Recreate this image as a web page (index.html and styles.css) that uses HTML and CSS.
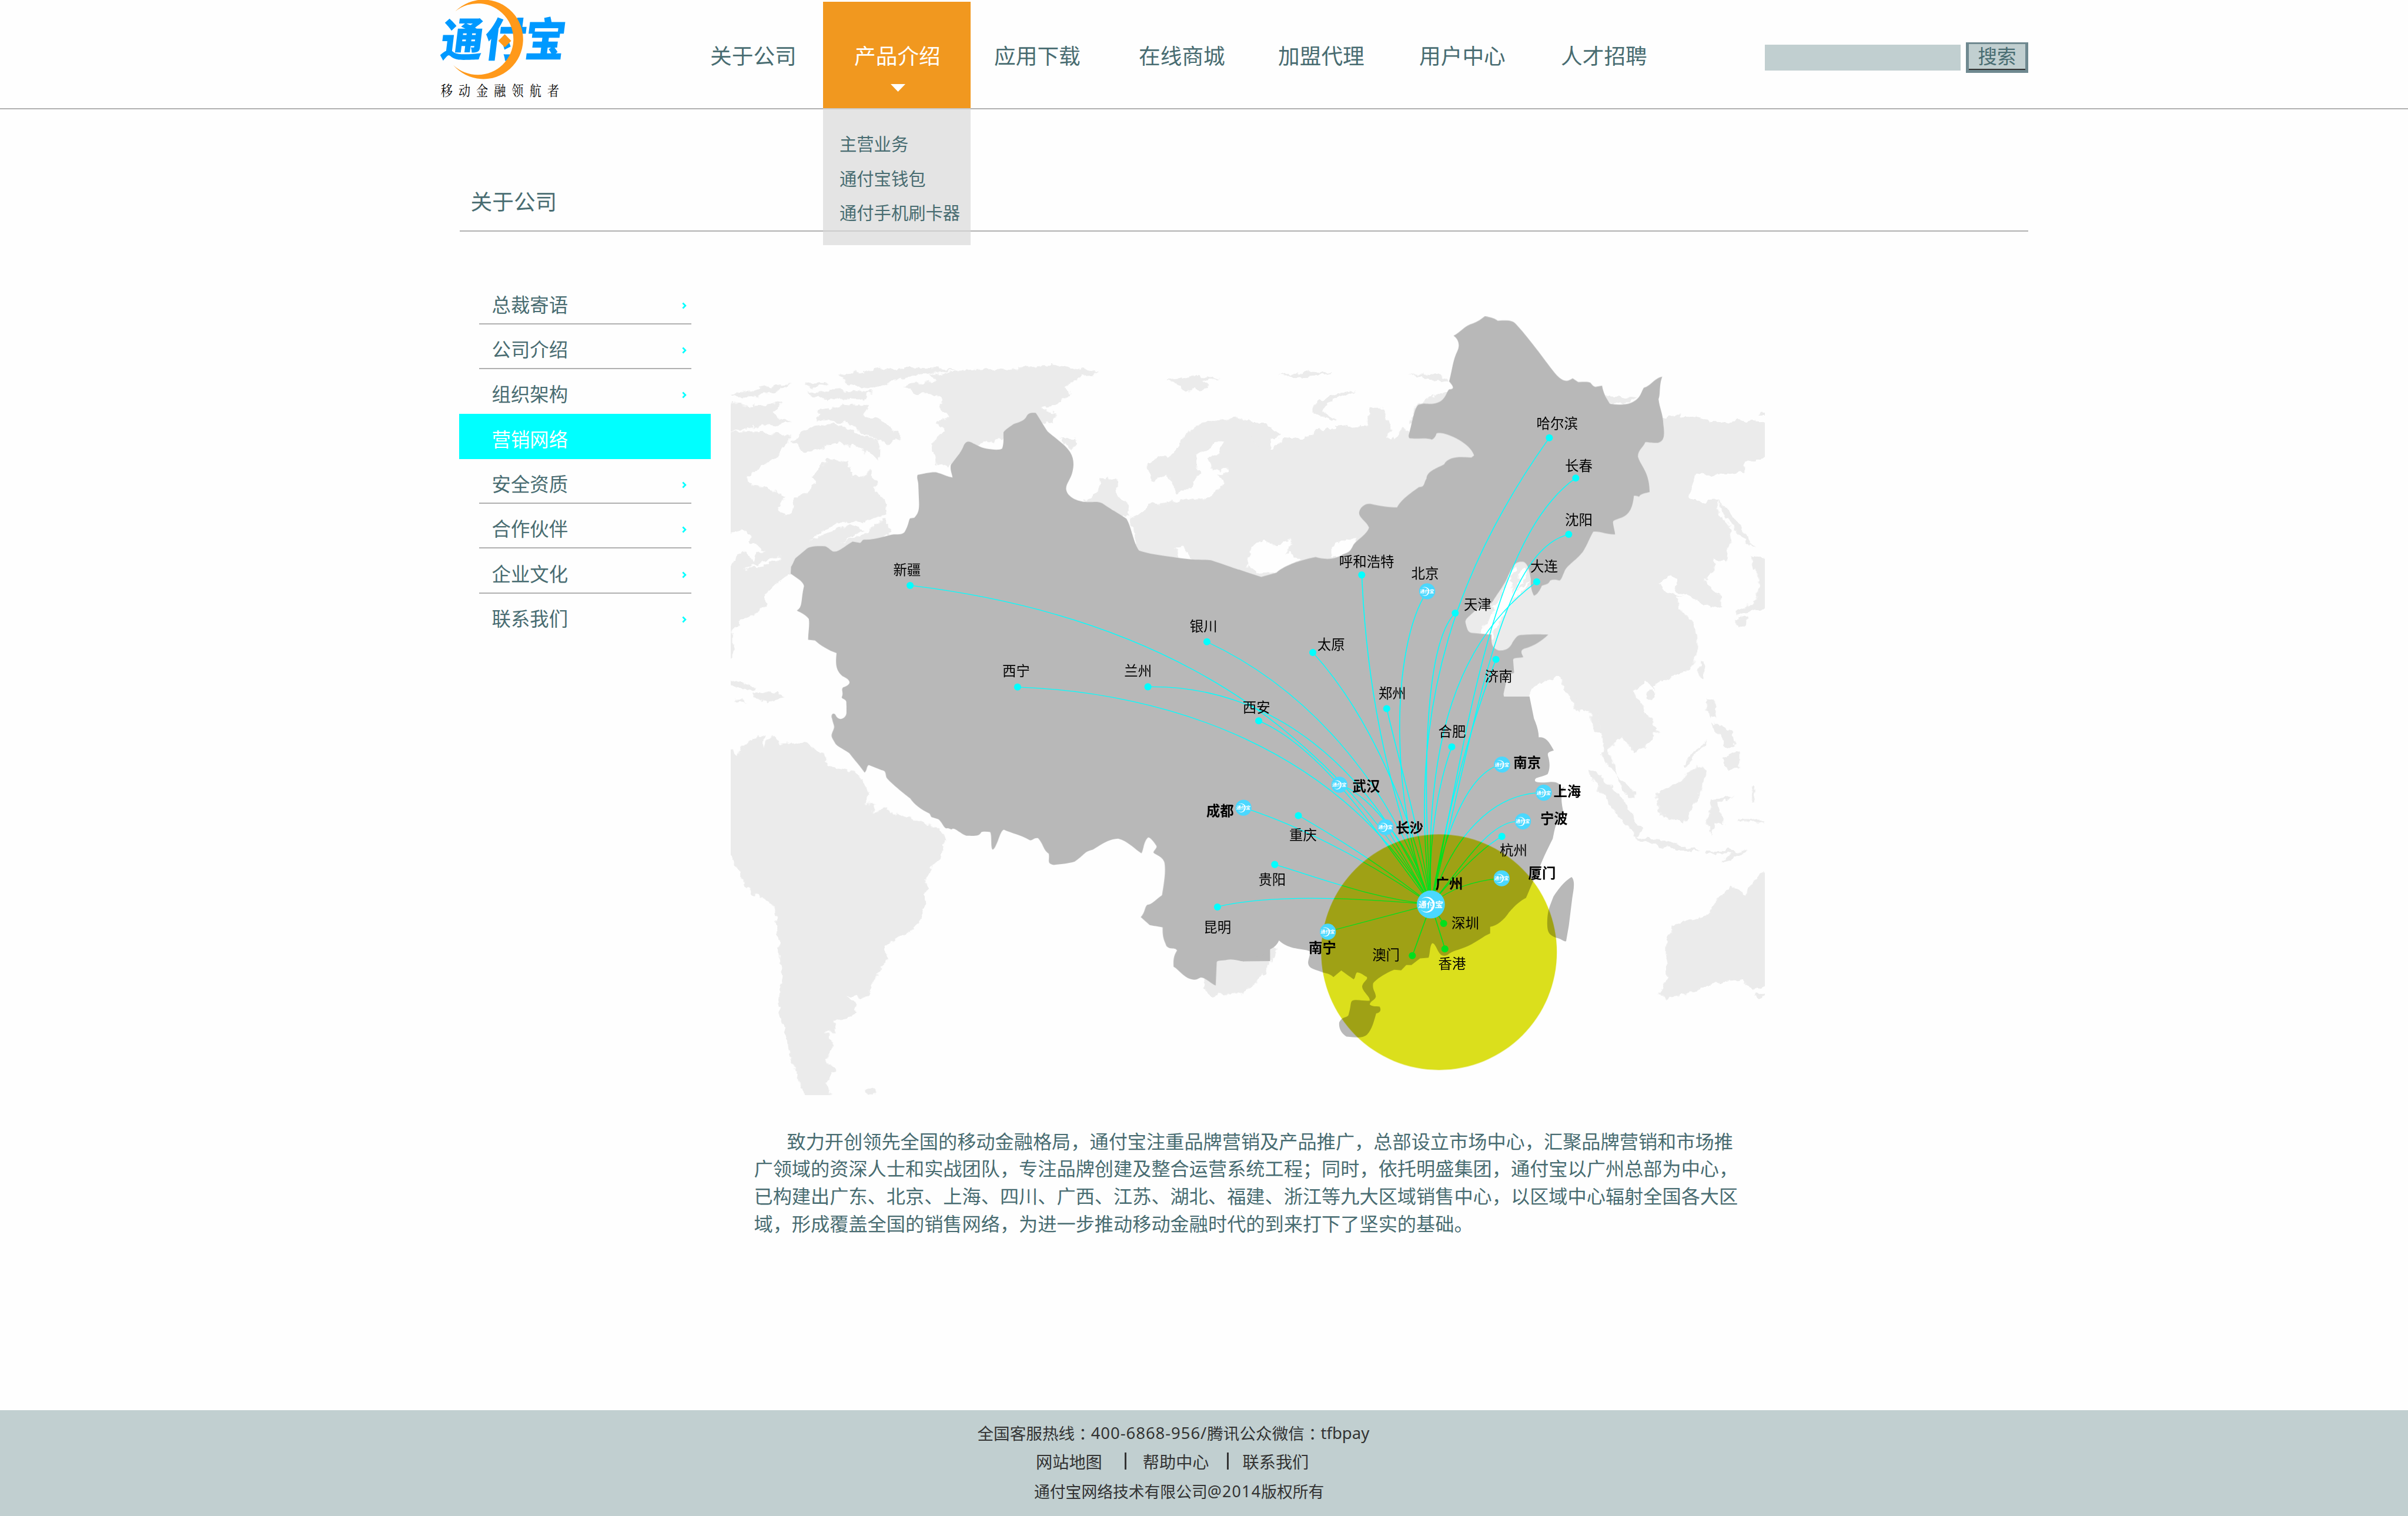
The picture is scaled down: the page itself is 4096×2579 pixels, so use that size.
FILE: index.html
```html
<!DOCTYPE html>
<html lang="zh-CN">
<head>
<meta charset="utf-8">
<title>通付宝 - 营销网络</title>
<link rel="stylesheet" href="styles.css">
</head>
<body>
<header class="header">
  <a class="logo">
    <svg viewBox="0 0 1080 750">
      <g class="logo-name" transform="translate(0 408) skewX(-7) scale(1 1.09)">
        <text x="74" y="0" textLength="308" lengthAdjust="spacingAndGlyphs">通</text>
        <text x="388" y="0" textLength="300" lengthAdjust="spacingAndGlyphs">付</text>
        <text x="682" y="0" textLength="296" lengthAdjust="spacingAndGlyphs">宝</text>
      </g>
      <path class="logo-moon" d="M190,82A288,288 0 1 1 175,472A259,259 0 1 0 190,82Z"/>
      <path class="logo-moon" d="M549,248L596,296L549,343L502,296Z"/>
      <text class="logo-slogan" x="84" y="580" transform="scale(1 1.2)">移动金融领航者</text>
    </svg>
  </a>
  <nav class="nav">
    <a>关于公司</a>
    <div class="nav-open">
      <a>产品介绍</a>
      <span class="caret"></span>
      <ul class="dropdown">
        <li>主营业务</li>
        <li>通付宝钱包</li>
        <li>通付手机刷卡器</li>
      </ul>
    </div>
    <a>应用下载</a>
    <a>在线商城</a>
    <a>加盟代理</a>
    <a>用户中心</a>
    <a>人才招聘</a>
  </nav>
  <div class="search">
    <div class="search-field"></div>
    <div class="search-button"><span>搜索</span></div>
  </div>
</header>

<h1 class="section-title">关于公司</h1>

<main class="main">
  <ul class="side">
    <li><span>总裁寄语</span><svg viewBox="0 0 10 16"><path d="M1.5 2L7.5 8L1.5 14"/></svg></li>
    <li><span>公司介绍</span><svg viewBox="0 0 10 16"><path d="M1.5 2L7.5 8L1.5 14"/></svg></li>
    <li class="plain"><span>组织架构</span><svg viewBox="0 0 10 16"><path d="M1.5 2L7.5 8L1.5 14"/></svg></li>
    <li class="active"><span>营销网络</span></li>
    <li><span>安全资质</span><svg viewBox="0 0 10 16"><path d="M1.5 2L7.5 8L1.5 14"/></svg></li>
    <li><span>合作伙伴</span><svg viewBox="0 0 10 16"><path d="M1.5 2L7.5 8L1.5 14"/></svg></li>
    <li><span>企业文化</span><svg viewBox="0 0 10 16"><path d="M1.5 2L7.5 8L1.5 14"/></svg></li>
    <li class="plain"><span>联系我们</span><svg viewBox="0 0 10 16"><path d="M1.5 2L7.5 8L1.5 14"/></svg></li>
  </ul>

  <div class="content">
    <svg class="map" viewBox="1770 740 2505 1920">
      <defs>
        <filter id="coast" x="-2%" y="-2%" width="104%" height="104%">
          <feTurbulence type="fractalNoise" baseFrequency="0.05" numOctaves="3" seed="4"/>
          <feDisplacementMap in="SourceGraphic" scale="20" xChannelSelector="R" yChannelSelector="G"/>
        </filter>
        <clipPath id="frame"><rect x="1770" y="740" width="2505" height="1912"/></clipPath>
        <symbol id="mark" viewBox="-34 -34 68 68" overflow="visible">
          <circle r="34" fill="#4ad8ff"/>
          <path fill="#fff" d="M-23,-13A19,19 0 1 1 -24,13A17,17 0 1 0 -23,-13Z"/>
          <text class="mark-name" x="-30" y="8" transform="skewX(-6)">通付宝</text>
        </symbol>
      </defs>

      <!-- world land -->
      <g clip-path="url(#frame)"><g filter="url(#coast)"><g transform="translate(1750 740) scale(.82908 .63776)">
        <g class="land">
          <path d="M528,300L620,285L610,262L700,245L860,238L960,226L1020,238L1100,252L1050,268L1000,310L1020,335L980,375L925,395L975,410L960,440L935,445L820,500L750,525L720,517L680,590L660,618L625,600L610,520L650,470L625,440L665,420L635,390L640,350L600,332L560,335Z"/>
          <path d="M340,265C400,250 520,225 680,242L600,260L520,275L470,300L430,315L370,300Z"/>
          <path d="M24,335L120,310L200,295L150,330L60,352Z"/><path d="M250,290L310,292L300,305L240,308Z"/>
          <path d="M240,330L340,318L440,330L400,358L300,355Z"/><path d="M0,366L90,380L180,368L140,410L200,440L120,460L60,470L0,480Z"/>
          <path d="M275,440L280,400L350,375L430,380L410,410L480,450L523,500L480,525L420,490L370,450L300,435Z"/>
          <path d="M200,510L260,460L330,450L410,490L460,515L455,590L400,540L330,520L240,560Z"/>
          <path d="M0,480L120,478L200,500L175,545L165,570L100,620L75,650L85,685L130,690L180,725L165,765L180,803L200,790L210,730L260,700L270,665L262,645L290,610L310,580L370,600L380,655L440,625L445,700L485,750L480,795L400,822L330,825L255,890L300,870L370,830L415,850L345,900L410,870L470,810L495,868L440,895L330,945L250,960L200,1018L160,1050L125,1090L128,1145L60,1190L30,1230L30,1340L0,1348Z"/>
          <path d="M1600,460L1500,425L1440,435L1380,455L1345,500L1320,560L1245,600L1245,645L1262,665L1300,640L1330,710L1370,690L1390,630L1380,570L1440,520L1462,520L1450,560L1420,580L1430,625L1525,620L1450,640L1465,675L1415,735L1390,730L1285,750L1245,755L1220,795L1188,810L1220,960L1600,1060Z"/>
          <path d="M1105,655L1150,660L1150,705L1190,770L1190,805L1110,765L1050,745L1100,710Z"/>
          <path d="M1300,280L1370,270L1450,272L1400,290L1430,310L1360,325Z"/><path d="M990,505L1030,505L1035,525L1015,550Z"/>
          <path d="M0,1415L50,1430L100,1450L90,1462L40,1455Z"/><path d="M90,1470L160,1468L178,1490L130,1508L90,1490Z"/><path d="M35,1495h30v10h-30z"/>
        </g>
        <path class="sea" d="M0,870L60,850L85,870L80,900L128,935L100,935L90,975L60,930L35,970L24,1000L0,1000Z"/>
        <path class="sea" d="M60,1000L165,950L170,965L110,990Z"/>
        <path class="sea" d="M1325,925L1345,920L1375,965L1345,970Z"/>
        <g transform="translate(1508 0)">
          <g class="land">
            <path d="M-30,445L60,445L90,455L125,495L90,512L20,490L65,545L100,545L130,500L190,505L240,470L320,460L370,455L385,390L420,390L430,430L450,470L430,500L460,505L475,460L500,480L600,470L1240,422L1320,420L1400,445L1480,435L1560,445L1560,575L1480,590L1480,630L1430,640L1340,640L1310,725L1360,745L1400,740L1400,780L1440,850L1425,970L1390,965L1385,1010L1360,1045L1410,1110L1410,1150L1350,1130L1310,1100L1280,1110L1290,1150L1335,1215L1340,1280L1330,1370L1290,1400L1210,1440L1215,1455L1190,1430L1155,1465L1170,1530L1230,1620L1040,1620L1025,1540L985,1540L960,1470L940,1410L880,1430L830,1515L780,1510L-30,1000Z"/>
            <path d="M345,322L290,330L225,365L215,405L240,430L290,432L250,405L260,365L310,340Z"/>
            <path d="M500,258L570,258L615,285L590,290Z"/><path d="M110,265L200,250L275,258L200,270Z"/>
            <path d="M560,345L640,320L640,420L500,450L520,380Z"/><path d="M1070,340L1160,352L1140,372L1080,365Z"/>
            <path d="M1400,740L1430,770L1460,820L1495,900L1510,930L1470,880L1420,800Z"/>
            <path d="M1500,945L1560,970L1560,1145L1500,1160L1460,1180L1450,1165L1500,1130L1530,1060L1500,990Z"/>
            <path d="M1450,1190L1490,1180L1480,1220L1460,1215Z"/>
            <path d="M1520,410h40v12h-40z"/>
            <ellipse cx="1355" cy="1385" rx="10" ry="33"/><ellipse cx="1208" cy="1478" rx="15" ry="18"/>
            <path d="M1368,1490L1390,1500L1395,1568L1370,1540Z"/>
          </g>
          <path class="sea" d="M30,960L40,910L80,895L110,915L160,885L155,905L140,940L185,960L110,1015L60,1020L25,990Z"/>
          <path class="sea" d="M275,955L270,920L300,890L345,890L330,935Z"/>
          <path class="sea" d="M1230,1055L1265,1020L1280,1045L1275,1080L1310,1100L1290,1105L1250,1090Z"/>
          <path class="sea" d="M812,983L788,1014L772,1093L752,1140L738,1140L748,1155L706,1244L740,1262L768,1187L788,1155L792,1134L836,1077L852,1051L816,1077L840,1019L840,998L820,1025L804,1093L796,1056L790,1040L812,1009Z"/>
        </g>
        <g class="land" transform="translate(0 1505)">
          <path d="M0,170L24,185L45,205L65,160L125,120L120,180L130,150L150,135L170,158L250,158L272,185L300,210L310,240L350,258L385,262L413,300L428,350L415,385L450,390L435,428L465,400L510,430L560,442L600,465L640,490L648,540L640,590L617,615L593,680L596,730L585,800L560,870L520,885L473,930L478,980L440,1065L415,1125L385,1125L358,1110L380,1140L392,1170L380,1200L325,1212L332,1255L298,1255L325,1290L315,1340L296,1360L328,1395L305,1450L330,1520L250,1520L210,1400L185,1270L165,1180L173,1080L160,870L152,775L70,710L24,590L0,560Z"/>
          <ellipse cx="433" cy="1478" rx="15" ry="14"/>
          <path d="M1405,1030L1412,1105L1430,1122L1470,1108L1520,1103L1568,1055L1600,1000L1618,940L1600,900L1440,960Z"/>
        </g>
        <g class="land" transform="translate(1508 1505)">
          <path d="M985,-20L995,40L1045,20L1065,150L1062,200L1095,270L1160,340L1155,367L1125,340L1090,230L1080,180L1120,130L1160,200L1215,135L1210,70L1160,-20Z"/>
          <path d="M1020,260L1060,280L1120,370L1175,480L1170,520L1110,440L1050,330Z"/><path d="M1165,515L1230,520L1350,565L1280,565L1175,530Z"/>
          <path d="M1360,565h90v10h-90z"/><path d="M1410,610L1440,575L1490,560L1430,605Z"/>
          <path d="M1222,350L1280,310L1340,240L1365,265L1345,360L1300,465L1230,430Z"/>
          <path d="M1380,370L1450,355L1400,385L1420,470L1390,460L1380,500L1370,460Z"/>
          <path d="M1365,-20L1395,10L1380,60Z"/><path d="M1385,80L1440,110L1450,170L1420,170Z"/><path d="M1410,210L1465,190L1465,250L1430,260Z"/>
          <path d="M1500,320h8v60h-8z"/><path d="M1460,450h75v9h-75z"/><path d="M1300,240L1365,140L1360,160L1305,250Z"/>
          <path d="M1560,620L1520,660L1500,690L1480,730L1440,700L1390,760L1370,810L1265,850L1248,930L1250,1050L1228,1110L1252,1130L1330,1100L1400,1065L1470,1055L1500,1095L1560,1075Z"/>
          <path d="M1505,1115L1560,1100L1520,1130Z"/>
        </g>
      </g></g></g>

      <!-- China -->
      <g class="china" transform="translate(1750 740) scale(.82908 .63776)">
        <path d="M199,1018L200,992C205,985 210,962 214,958L242,928C250,915 270,912 300,914C310,918 318,934 325,934C340,936 355,915 380,896L402,901C408,897 408,888 414,889C450,890 480,872 500,869C520,869 525,869 532,860C545,830 544,812 548,808L560,806C572,790 575,775 574,745L572,680C572,665 566,655 570,643C590,638 605,632 625,633C640,638 655,650 672,653C671,640 664,625 667,605C675,590 695,560 703,537C708,518 715,515 722,517C735,522 750,538 770,543C790,548 812,549 817,543C823,520 820,500 821,481C826,470 840,460 850,450C865,443 878,440 887,424C892,408 900,405 915,407C925,425 940,460 950,478C965,497 1000,525 1015,555C1027,580 1027,605 1023,628C1018,660 1003,675 1004,697C1006,725 1035,745 1065,746C1085,747 1095,742 1110,751C1130,770 1165,795 1180,809C1195,840 1200,900 1217,930C1250,945 1290,950 1350,961C1380,967 1405,964 1427,967C1460,980 1520,1010 1573,1031V1600H362V1505C360,1495 350,1495 348,1488C355,1470 345,1460 352,1450C375,1440 380,1425 350,1407C330,1385 330,1360 333,1320C310,1310 285,1290 270,1272L250,1269C250,1240 255,1215 252,1190C240,1170 225,1165 217,1158C235,1145 228,1120 238,1065C235,1045 210,1030 199,1018Z"/>
        <path transform="translate(1508 0)" d="M0,1003L65,1031L110,1015C130,990 170,970 225,955C245,962 275,970 305,945C325,935 325,935 335,910C345,890 375,870 381,843C375,820 350,805 352,785C355,765 370,750 385,753C410,760 440,768 463,766C475,735 510,705 527,689C545,690 540,675 549,657C550,630 575,620 600,603C615,570 650,575 680,577L688,569C680,535 640,500 600,486C590,483 580,483 578,486C575,500 570,505 565,509C550,500 520,507 500,504C495,500 497,490 499,482C510,430 515,375 530,375C545,370 540,373 560,373C605,373 605,330 615,318C630,318 630,310 615,288C625,240 625,210 640,170C648,145 640,125 628,114C650,100 660,75 685,67C705,58 712,45 720,41C740,44 750,50 757,57C790,55 800,55 812,72C860,140 900,220 930,265C950,290 960,290 976,276L992,290C1010,290 1020,288 1028,293C1035,305 1040,310 1045,308L1062,304C1065,330 1075,355 1085,372C1100,377 1130,378 1145,370C1175,355 1175,330 1184,312C1205,305 1215,275 1238,270C1228,300 1233,340 1227,355C1230,390 1240,410 1241,450C1245,490 1245,515 1225,521C1200,522 1195,516 1188,519C1185,535 1165,550 1167,575C1175,610 1200,630 1201,708C1190,712 1175,713 1170,726C1165,722 1160,722 1155,722C1152,760 1145,795 1115,807C1100,815 1093,815 1094,825C1095,840 1100,860 1100,869C1075,870 1055,855 1036,859C1025,885 1020,905 1006,935C985,970 960,985 952,1010C945,1030 942,1045 936,1044C925,1040 915,1040 910,1045C905,1060 895,1060 886,1064C880,1085 870,1100 863,1102C858,1090 852,1070 854,1040C850,1010 845,975 830,973C805,970 800,995 787,1028C775,1065 750,1105 742,1125C730,1145 700,1140 690,1160C675,1180 660,1190 663,1205C668,1230 670,1240 680,1243L739,1250C738,1280 738,1300 760,1310C785,1312 795,1295 800,1280C810,1260 815,1250 830,1251C860,1248 880,1248 905,1250C885,1275 860,1295 835,1303C820,1310 828,1325 832,1335C815,1340 805,1335 802,1345L805,1395C795,1400 790,1400 785,1410L774,1475C775,1500 790,1502 805,1503C830,1505 830,1510 840,1520C850,1540 855,1555 860,1568V1600H0Z"/>
        <path transform="translate(0 1505)" d="M362,0V-20H1600V985L1523,986C1510,985 1490,975 1475,980C1460,985 1445,980 1444,990L1441,1078C1430,1075 1410,1045 1396,1048C1385,1055 1380,1060 1360,1050C1340,1035 1330,1015 1318,1007C1316,980 1320,960 1328,945C1322,930 1310,945 1297,928C1290,905 1285,895 1286,857C1270,852 1260,852 1248,848L1222,818C1235,800 1233,780 1241,771C1255,770 1262,755 1284,735C1290,690 1296,640 1291,610C1285,585 1260,580 1259,572C1260,565 1270,555 1268,548C1262,535 1250,515 1244,515C1230,530 1230,565 1224,576C1205,560 1185,530 1156,520C1130,522 1115,535 1082,562C1055,570 1060,580 1029,607C1010,615 995,615 968,620C945,615 957,600 953,577C935,560 940,545 922,518C910,515 905,528 898,526C870,505 845,500 822,486C810,490 805,545 790,562C782,560 788,510 782,495C770,493 760,492 755,497C750,510 740,510 712,509C695,500 680,480 672,482C667,490 663,478 655,481C645,480 640,450 628,445L610,438L605,425C580,410 560,390 548,367C525,345 485,300 480,290C475,280 480,262 465,260L427,240C420,245 423,260 415,269C405,250 385,220 370,195C360,185 335,170 330,160C322,140 315,135 321,115C330,90 325,95 320,65C315,45 325,40 330,50C335,65 345,70 355,60C368,45 362,25 362,0Z"/>
        <path transform="translate(1508 1505)" d="M-5,-20H850L863,63C870,85 877,110 877,135C895,133 905,145 921,185C905,190 902,195 904,205C912,240 908,260 903,275C880,290 865,285 866,300C868,307 880,307 900,306C930,300 940,310 943,330L952,322C940,350 942,380 950,425L945,430C925,460 925,480 918,520C905,555 890,590 878,635C860,680 845,730 840,745C825,755 810,770 790,800C775,830 755,850 735,855L735,880C715,890 700,910 670,928C640,945 625,945 610,962C595,970 588,960 582,945C575,925 570,915 565,918C558,930 560,955 555,972L530,975L505,1000L490,1000L475,1020L455,1018C430,1030 400,1055 393,1070C390,1095 400,1100 401,1120C398,1135 385,1135 383,1150C395,1160 400,1155 412,1158C417,1170 415,1180 402,1184C395,1215 390,1245 375,1265C360,1280 345,1275 315,1272C300,1260 292,1240 294,1218C305,1190 320,1205 322,1185C330,1150 325,1138 335,1134C350,1130 370,1138 383,1135C385,1120 360,1100 361,1080C365,1060 380,1055 374,1045C365,1040 360,1030 346,1028C340,1035 342,1050 336,1054C325,1045 310,1030 300,1021L277,1046C265,1030 255,1033 240,1025C215,1015 203,1010 203,990C205,970 210,960 208,948C185,935 150,945 118,907C110,930 100,935 85,945C75,960 68,970 55,967C35,975 25,973 15,986L-5,980Z"/>
        <path transform="translate(1508 1505)" d="M973,666C985,680 978,720 975,745L965,850L957,910C950,912 945,900 925,895C905,885 903,870 902,850C902,800 905,790 920,740C940,700 955,680 973,666Z"/>
      </g>

      <!-- routes to Guangzhou -->
      <g class="routes" transform="translate(1750 740) scale(.82908 .63776)">
        <path d="M548,1063C1100,1150 1700,1430 2070,2275"/>
        <path d="M862,1449C1300,1470 1800,1680 2070,2275"/>
        <path d="M1243,1448C1600,1440 1900,1750 2070,2275"/>
        <path d="M1415,1277C1700,1450 1950,1800 2070,2275"/>
        <path d="M1567,1577C1750,1680 1900,1980 2070,2275"/>
        <path d="M1725,1318C1860,1510 2000,1850 2070,2275"/>
        <path d="M1868,1023C1880,1400 1930,1800 2070,2275"/>
        <path d="M1941,1531C1970,1700 2040,2000 2070,2275"/>
        <path d="M2059,1085C1950,1300 1950,1900 2070,2275"/>
        <path d="M2141,1168C2040,1300 2050,1900 2070,2275"/>
        <path d="M2416,502C2170,950 1990,1500 2070,2275"/>
        <path d="M2493,655C2250,880 2180,1600 2070,2275"/>
        <path d="M2473,869C2270,930 2200,1600 2070,2275"/>
        <path d="M2379,1049C2150,1270 2050,1650 2070,2275"/>
        <path d="M2260,1344C2190,1580 2120,1900 2070,2275"/>
        <path d="M2131,1676C2090,1820 2060,2050 2070,2275"/>
        <path d="M2278,1743C2170,1770 2100,2050 2070,2275"/>
        <path d="M2400,1850C2250,1850 2130,2020 2070,2275"/>
        <path d="M2339,1959C2250,1950 2190,2080 2070,2275"/>
        <path d="M2277,2016C2220,2060 2150,2150 2070,2275"/>
        <path d="M2277,2175C2200,2185 2130,2210 2070,2275"/>
        <path d="M1803,1820C1900,1860 2020,2080 2070,2275"/>
        <path d="M1938,1980C1990,2090 2030,2180 2070,2275"/>
        <path d="M1522,1907C1720,1990 1920,2140 2070,2275"/>
        <path d="M1683,1937C1820,2040 1950,2150 2070,2275"/>
        <path d="M1614,2123C1780,2190 1900,2250 2070,2275"/>
        <path d="M1446,2284C1620,2230 1900,2255 2070,2275"/>
        <path d="M1769,2378L2070,2275"/><path d="M2107,2347L2070,2275"/><path d="M2016,2469L2070,2275"/><path d="M2111,2443L2070,2275"/>
      </g>
      <g class="dots">
        <circle cx="2204.3" cy="1418" r="8.6"/><circle cx="2464.7" cy="1664" r="8.6"/><circle cx="2780.5" cy="1663.5" r="8.6"/>
        <circle cx="2923.5" cy="1554.4" r="8.6"/><circle cx="3049" cy="1746" r="8.6"/><circle cx="3180" cy="1580.5" r="8.6"/>
        <circle cx="3298.5" cy="1392.5" r="8.6"/><circle cx="3359" cy="1716.5" r="8.6"/><circle cx="3525" cy="1485" r="8.6"/>
        <circle cx="3753" cy="1060" r="8.6"/><circle cx="3817" cy="1157.7" r="8.6"/><circle cx="3800" cy="1294" r="8.6"/>
        <circle cx="3722.5" cy="1409" r="8.6"/><circle cx="3623.8" cy="1597" r="8.6"/><circle cx="3516.7" cy="1809" r="8.6"/>
        <circle cx="3638" cy="2026" r="8.6"/><circle cx="3145" cy="1975.5" r="8.6"/><circle cx="3087.8" cy="2094" r="8.6"/>
        <circle cx="2949" cy="2197" r="8.6"/><circle cx="3497" cy="2237" r="8.6"/><circle cx="3421" cy="2315" r="8.6"/><circle cx="3500" cy="2298.5" r="8.6"/>
      </g>
      <circle class="zone" cx="3485.8" cy="2306.5" r="285.5"/>

      <use href="#mark" x="3432" y="2157" width="68" height="68"/>
      <use href="#mark" x="3437.5" y="1412.5" width="39" height="39"/>
      <use href="#mark" x="3619" y="1832.3" width="39" height="39"/>
      <use href="#mark" x="3720" y="1900.5" width="39" height="39"/>
      <use href="#mark" x="3669.5" y="1970" width="39" height="39"/>
      <use href="#mark" x="3618" y="2108" width="39" height="39"/>
      <use href="#mark" x="3225" y="1881.4" width="39" height="39"/>
      <use href="#mark" x="3336.5" y="1984" width="39" height="39"/>
      <use href="#mark" x="2992.5" y="1937" width="39" height="39"/>
      <use href="#mark" x="3197" y="2237.5" width="39" height="39"/>

      <g class="city">
        <text x="2163.5" y="1392">新疆</text><text x="2882" y="1529">银川</text><text x="2428" y="1638">西宁</text>
        <text x="2723" y="1638">兰州</text><text x="3722" y="1037">哈尔滨</text><text x="3791" y="1140">长春</text>
        <text x="3791" y="1271">沈阳</text><text x="3707" y="1384">大连</text><text x="3243.6" y="1372">呼和浩特</text>
        <text x="3418.5" y="1401.5">北京</text><text x="3546" y="1476">天津</text><text x="3191" y="1573">太原</text>
        <text x="3597" y="1650">济南</text><text x="3339" y="1692">郑州</text><text x="3010" y="1726">西安</text>
        <text x="3484" y="1784">合肥</text><text x="3633" y="2072">杭州</text><text x="3123" y="2035">重庆</text>
        <text x="3048" y="2143">贵阳</text><text x="3516" y="2249">深圳</text><text x="3324" y="2325">澳门</text>
        <text x="3484" y="2347">香港</text><text x="2915.5" y="2259">昆明</text>
      </g>
      <g class="city hub">
        <text x="3666" y="1859">南京</text><text x="3276" y="1916">武汉</text><text x="3763" y="1930">上海</text>
        <text x="3381" y="2018">长沙</text><text x="3731" y="1995">宁波</text><text x="3702" y="2128">厦门</text>
        <text x="3477" y="2153">广州</text><text x="3170" y="2308">南宁</text><text x="2922" y="1977">成都</text>
      </g>
    </svg>

    <p class="intro">致力开创领先全国的移动金融格局，通付宝注重品牌营销及产品推广，总部设立市场中心，汇聚品牌营销和市场推<br>广领域的资深人士和实战团队，专注品牌创建及整合运营系统工程；同时，依托明盛集团，通付宝以广州总部为中心，<br>已构建出广东、北京、上海、四川、广西、江苏、湖北、福建、浙江等九大区域销售中心，以区域中心辐射全国各大区<br>域，形成覆盖全国的销售网络，为进一步推动移动金融时代的到来打下了坚实的基础。</p>
  </div>
</main>

<footer class="footer">
  <p class="hotline">全国客服热线<b>：</b><span>400-6868-956/</span>腾讯公众微信<b>：</b>tfbpay</p>
  <p class="links"><a>网站地图</a><i></i><a>帮助中心</a><i></i><a>联系我们</a></p>
  <p class="copyright">通付宝网络技术有限公司<span>@2014</span>版权所有</p>
</footer>
</body>
</html>
```
FILE: styles.css
```css
* { box-sizing: border-box; margin: 0; padding: 0; }
body {
  width: 4096px;
  height: 2579px;
  display: flex;
  flex-direction: column;
  overflow: hidden;
  background: #fefefe;
  color: #486c71;
  font-family: "Noto Sans", "Noto Sans CJK SC", sans-serif;
}
ul { list-style: none; }

.header {
  flex: none;
  display: flex;
  height: 186px;
  padding-left: 730px;
  border-bottom: 2px solid #b0b0b0;
}
.logo { width: 253px; height: 176px; }
.logo svg { display: block; width: 253px; height: 176px; }
.logo-name { font: 900 306px "Noto Sans CJK SC", sans-serif; fill: #0099ff; }
.logo-moon { fill: #ff991a; }
.logo-slogan { font: 400 86px "Noto Serif CJK SC", "Noto Sans CJK SC", serif; letter-spacing: 43px; fill: #000; }

.nav {
  display: grid;
  grid-template-columns: 192px 291px 246px 237px 240px 241px 146px;
  margin-left: 225px;
  font-size: 36.7px;
  line-height: 50px;
  white-space: nowrap;
}
.nav > a { padding-top: 70px; }
.nav-open {
  position: relative;
  width: 251px;
  height: 181px;
  margin-top: 3px;
  padding: 67px 0 0 53px;
  background: #f1981f;
  color: #fff;
}
.caret {
  display: block;
  width: 25px;
  height: 13px;
  margin: 23px 0 0 62px;
  background: #fff;
  clip-path: polygon(0 0, 100% 0, 50% 100%);
}
.dropdown {
  position: absolute;
  z-index: 2;
  left: 0;
  top: 181px;
  width: 251px;
  height: 233px;
  padding: 32px 0 0 28px;
  background: rgba(215, 215, 215, .68);
  color: #486c71;
  font-size: 29.3px;
  line-height: 58.6px;
}

.search { display: flex; margin-left: 201px; }
.search-field { width: 333px; height: 44px; margin-top: 76px; background: #c1cfd0; }
.search-button {
  width: 106px;
  height: 52px;
  margin: 72px 0 0 9px;
  border: solid #6f8990;
  border-width: 3.5px 5.5px 5px;
  background: #c1cfd0;
}
.search-button span {
  display: block;
  height: 43.5px;
  border-bottom: 2px solid #333;
  text-align: center;
  font-size: 32.5px;
  line-height: 42px;
}

.section-title {
  flex: none;
  width: 2668px;
  height: 208px;
  margin-left: 781.5px;
  padding: 132px 0 0 19px;
  border-bottom: 2px solid #b0b0b0;
  font-size: 36.7px;
  font-weight: 400;
  line-height: 50px;
}

.main { display: flex; gap: 34px; margin-left: 781px; }
.side { width: 428px; margin-top: 81.6px; }
.side li {
  display: flex;
  align-items: center;
  justify-content: space-between;
  height: 76.3px;
  margin: 0 33.5px;
  padding: 10px 8px 0 22px;
  border-bottom: 2.4px solid #b0b0b0;
  font-size: 32.4px;
  line-height: 48px;
}
.side li.plain { border-bottom-color: transparent; }
.side li.active { margin: 0; padding: 9px 0 0 55.5px; border: 0; background: #0ff; color: #fff; }
.side svg { width: 8px; height: 12px; margin-top: 4px; fill: none; stroke: #0ff; stroke-width: 3.6; }

.content { width: 1760px; margin-top: 125.6px; }
.map { display: block; width: 1759px; height: 1348px; }
.land { fill: #ebebeb; }
.sea { fill: #fefefe; }
.china { fill: #b8b8b8; }
.routes { fill: none; stroke: #0ff; stroke-width: 2.8; }
.dots { fill: #0ff; }
.zone { fill: #dce01c; mix-blend-mode: multiply; }
.mark-name { font: 700 20px "Noto Sans CJK SC", sans-serif; fill: #fff; }
.city { font: 400 33.4px "Noto Sans CJK SC", sans-serif; fill: #000; }
.hub { font-weight: 700; }

.intro {
  margin: 51px 0 0 39.5px;
  text-indent: 56px;
  font-size: 32.2px;
  line-height: 46.75px;
  white-space: nowrap;
}

.footer {
  flex: none;
  height: 180.4px;
  margin-top: auto;
  background: #c1cfd0;
  color: #333;
  white-space: nowrap;
}
.footer p { display: flex; align-items: center; }
.hotline { height: 48px; margin: 14px 0 0 1662.5px; font-size: 27.6px; }
.hotline b { width: 27.6px; padding-left: 7px; font-weight: 400; }
.hotline span { letter-spacing: .9px; }
.links { height: 48px; margin: 1px 0 0 1762px; font-size: 28.2px; }
.links i { width: 3px; height: 29px; margin: 0 28px 0 38px; background: #333; }
.links i + a + i { width: 3px; margin: 0 24px 0 30px; }
.copyright { height: 48px; margin: 3px 0 0 1759px; font-size: 26.8px; }
.copyright span { letter-spacing: 1.2px; }
```
